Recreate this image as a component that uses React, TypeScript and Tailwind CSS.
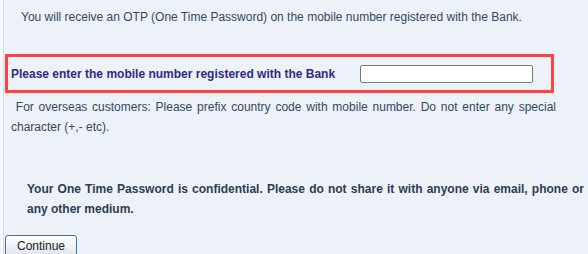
export default function App() {
  return (
    <div className="w-[588px] h-[254px] overflow-hidden bg-[#f6f8fc] pl-[3px]">
      <div className="h-full border-l border-[#d5dce8] bg-[#edf1f8] font-['Arial','Liberation_Sans',sans-serif] text-[12px] leading-[20px]">
        <p className="pt-[7px] pl-[17px] text-[#34495e]">
          You will receive an OTP (One Time Password) on the mobile number registered with the Bank.
        </p>
        <div className="mt-[27px] ml-[1px] w-[549px] h-[39px] border-[3px] border-[#ff4242] flex items-center">
          <span className="w-[352px] pl-[3px] font-bold text-[#2e2d80]">
            Please enter the mobile number registered with the Bank
          </span>
          <input
            type="text"
            className="w-[173px] h-[18px] border border-[#7a7a7a] rounded-[2px] bg-white outline-none"
          />
        </div>
        <p className="mt-[4px] ml-[7px] w-[545px] text-justify text-[#34495e]">
          &nbsp;For overseas customers: Please prefix country code with mobile number. Do not enter any special character (+,- etc).
        </p>
        <p className="mt-[42px] ml-[23px] w-[557px] text-justify font-bold text-[#2c3e50]">
          Your One Time Password is confidential. Please do not share it with anyone via email, phone or any other medium.
        </p>
        <button
          type="button"
          className="mt-[16px] ml-[1px] w-[72px] h-[22px] border border-[#3f70b5] rounded-[3px] bg-gradient-to-b from-[#ffffff] to-[#dfe4eb] text-[12px] leading-[20px] text-[#222222]"
        >
          Continue
        </button>
      </div>
    </div>
  );
}
